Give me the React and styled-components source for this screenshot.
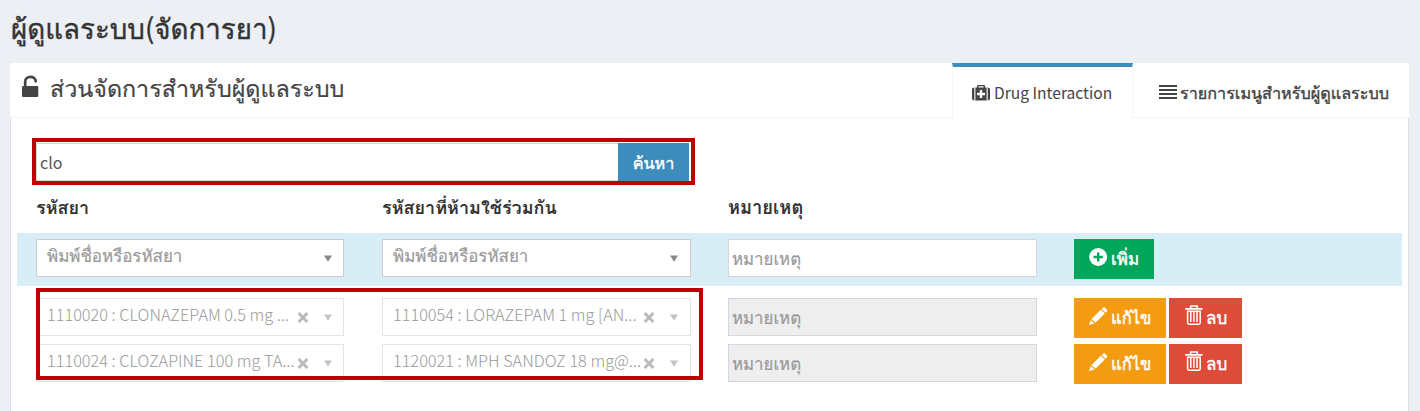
import React from "react";
import styled, { createGlobalStyle } from "styled-components";

const Global = createGlobalStyle`
  * { box-sizing: border-box; }
  body {
    margin: 0;
    background: #ecf0f5;
    overflow: hidden;
    font-family: "Noto Sans CJK JP", Tahoma, Loma, Waree, "Noto Sans Thai", "Noto Sans", sans-serif;
    font-size: 16px;
    color: #333;
  }
`;

const Page = styled.div`
  height: 411px;
  padding: 0 11px 0 10px;
  display: flex;
  flex-direction: column;
  overflow: hidden;
`;

const Text = styled.span`
  display: inline-block;
  white-space: nowrap;
  font-size: ${(p) => p.$size || 16}px;
  font-weight: ${(p) => p.$weight || 400};
  -webkit-text-stroke: ${(p) => p.$stroke || 0}px currentColor;
  line-height: 24px;
`;

const Title = styled.h1`
  margin: 0;
  height: 63px;
  flex: none;
  padding: 13px 0 0 1px;
  font-weight: 400;
  line-height: 24px;
`;

const Panel = styled.section`
  flex: 1;
  background: #fff;
  border-radius: 3px 3px 0 0;
`;

const Header = styled.header`
  height: 55px;
  display: flex;
  border-bottom: 1px solid #f4f4f4;
`;

const Heading = styled.div`
  flex: 1;
  display: flex;
  align-items: flex-start;
  gap: 11px;
  padding: 12px 0 0 12px;
  color: #444;
`;

const Tab = styled.div`
  height: 55px;
  width: ${(p) => p.$width}px;
  display: flex;
  align-items: flex-start;
  gap: ${(p) => p.$gap}px;
  padding: ${(p) => (p.$active ? 13 : 17)}px 0 0 ${(p) => (p.$active ? 19 : 26)}px;
  border-top: ${(p) => (p.$active ? "4px solid #3c8dbc" : "0")};
  border-left: ${(p) => (p.$active ? "1px solid #f4f4f4" : "0")};
  border-right: ${(p) => (p.$active ? "1px solid #f4f4f4" : "0")};
  background: ${(p) => (p.$active ? "#fff" : "transparent")};
  color: #444;
  svg { margin-top: 5px; flex: none; }
`;

const Body = styled.div`
  position: relative;
  height: 293px;
  padding: 25px 6px 0;
  border-left: 1px solid #dcdde0;
  border-right: 1px solid #dcdde0;
`;

const Search = styled.div`
  display: flex;
  height: 38px;
  width: 653px;
  margin-left: 19px;
`;

const SearchInput = styled.div`
  flex: 1;
  display: flex;
  align-items: flex-start;
  padding: 6px 0 0 3px;
  border: 1px solid #d2d6de;
  border-right: 0;
  color: #555;
`;

const SearchButton = styled.div`
  width: 71px;
  display: flex;
  justify-content: center;
  padding-top: 7px;
  background: #3c8dbc;
  color: #fff;
`;

const Row = styled.div`
  display: grid;
  grid-template-columns: 346px 346px 346px 1fr;
  height: ${(p) => p.$height}px;
  padding: ${(p) => p.$top || 0}px 0 0 19px;
  background: ${(p) => (p.$info ? "#d9edf7" : "transparent")};
`;

const Select = styled.div`
  width: ${(p) => p.$width || 308}px;
  height: 38px;
  display: flex;
  align-items: flex-start;
  padding: 3px ${(p) => (p.$width === 309 ? 12 : 11)}px 0 10px;
  border: 1px solid ${(p) => (p.$disabled ? "#e4e4e4" : "#ccc")};
  background: #fff;
  color: ${(p) => (p.$disabled ? "#999" : "#999")};
  > span { flex: 1; }
  svg { flex: none; }
`;

const Note = styled.div`
  width: 309px;
  height: 38px;
  padding: 6px 0 0 3px;
  border: 1px solid #d2d6de;
  background: ${(p) => (p.$disabled ? "#eee" : "#fff")};
  color: #999;
`;

const Actions = styled.div`
  display: flex;
  gap: 3px;
`;

const Button = styled.div`
  width: ${(p) => p.$width}px;
  height: 40px;
  display: flex;
  align-items: flex-start;
  gap: 3px;
  padding: 7px 0 0 ${(p) => p.$left || 15}px;
  background: ${(p) => p.$color};
  color: #fff;
  svg { flex: none; margin-top: 2px; }
`;

const Highlight = styled.div`
  position: absolute;
  left: ${(p) => p.$x}px;
  top: ${(p) => p.$y}px;
  width: ${(p) => p.$w}px;
  height: ${(p) => p.$h}px;
  border: 4px solid #c00000;
`;

const ClearSvg = styled.svg`
  margin: 10px 15px 0 0;
`;
const ArrowSvg = styled.svg`
  margin-top: 12px;
`;

const UnlockIcon = () => (
  <svg width="17" height="22" viewBox="0 0 17 22">
    <path d="M3.2 12V6.6C3.2 0.4 13.7 0.4 13.7 6.3" fill="none" stroke="#444" strokeWidth="2.7" strokeLinecap="round" />
    <rect x="0" y="11" width="16.3" height="11" rx="1.2" fill="#444" />
  </svg>
);

const MedkitIcon = () => (
  <svg width="18" height="16" viewBox="0 0 18 16" fill="#444">
    <path d="M2.3 2.5V15.5C.8 15.5 0 14.6 0 13.3V4.7C0 3.4.8 2.5 2.3 2.5ZM15.7 2.5C17.2 2.5 18 3.4 18 4.7V13.3C18 14.6 17.2 15.5 15.7 15.5Z" />
    <path fillRule="evenodd" d="M5 2.5V1Q5 0 6 0H12Q13 0 13 1V2.5H14.6V15.5H3.4V2.5ZM6.4 2.5H11.6V1.3H6.4ZM7.8 5V7.8H5V10.2H7.8V13H10.2V10.2H13V7.8H10.2V5Z" />
  </svg>
);

const ListIcon = () => (
  <svg width="18" height="14" viewBox="0 0 18 14" fill="#444" shapeRendering="crispEdges">
    <path d="M0 0h18v2H0zM0 4h18v2H0zM0 8h18v2H0zM0 12h18v2H0z" />
  </svg>
);

const PlusIcon = () => (
  <svg width="19" height="18" viewBox="0 0 19 18">
    <circle cx="9.2" cy="9" r="9" fill="#fff" />
    <path d="M9.2 4.4v9.2M4.6 9h9.2" stroke="#00a65a" strokeWidth="2.4" />
  </svg>
);

const PencilIcon = () => (
  <svg width="19" height="18" viewBox="0 0 19 18" fill="#fff">
    <path d="M14.2.5Q15 0 15.8.6L18.1 2.9Q18.7 3.6 18.1 4.3L16.6 5.7 12.7 1.9ZM11.9 2.7 15.8 6.5 6.4 15.8 2.5 12ZM1.8 12.9 5.4 16.5 0 18Z" />
  </svg>
);

const TrashSvg = styled.svg`
  && { margin-top: 0; }
`;

const TrashIcon = () => (
  <TrashSvg width="18" height="20" viewBox="0 0 18 20" fill="none" stroke="#fff">
    <path d="M5.6 3V1H12.2V3" strokeWidth="1.6" strokeLinejoin="round" />
    <path d="M0.9 3.8H16.9" strokeWidth="1.8" strokeLinecap="round" />
    <path d="M2.6 6.2H15.2V17.8Q15.2 19.2 14 19.2H3.8Q2.6 19.2 2.6 17.8ZM5.8 6.5V17M8.9 6.5V17M12 6.5V17" strokeWidth="1.5" />
  </TrashSvg>
);

const Clear = () => (
  <ClearSvg width="12" height="11" viewBox="0 0 12 11">
    <path d="M1.6 1 10.4 10M10.4 1 1.6 10" stroke="#bbb" strokeWidth="3" />
  </ClearSvg>
);

const Arrow = ({ color }) => (
  <ArrowSvg width="8" height="7" viewBox="0 0 8 7">
    <path d="M0 .5H8L4 6.8Z" fill={color} />
  </ArrowSvg>
);

const drugs = [
  { first: "1110020 : CLONAZEPAM 0.5 mg ...", second: "1110054 : LORAZEPAM 1 mg [AN..." },
  { first: "1110024 : CLOZAPINE 100 mg TA...", second: "1120021 : MPH SANDOZ 18 mg@..." },
];

const DrugSelect = ({ children, width }) => (
  <Select $disabled $width={width}>
    <Text $size={16.3} $weight={300}>{children}</Text>
    <Clear />
    <Arrow color="#c4c4c4" />
  </Select>
);

const EmptySelect = ({ width }) => (
  <Select $width={width}>
    <Text $size={16.9} $stroke={0.2}>พิมพ์ชื่อหรือรหัสยา</Text>
    <Arrow color="#888" />
  </Select>
);

export default function App() {
  return (
    <>
      <Global />
      <Page>
        <Title><Text $size={27.7} $stroke={0.4}>ผู้ดูแลระบบ(จัดการยา)</Text></Title>
        <Panel>
          <Header>
            <Heading>
              <UnlockIcon />
              <Text $size={23.3} $stroke={0.2}>ส่วนจัดการสำหรับผู้ดูแลระบบ</Text>
            </Heading>
            <Tab $active $width={181} $gap={4}>
              <MedkitIcon />
              <Text $size={15.6}>Drug Interaction</Text>
            </Tab>
            <Tab $width={276} $gap={3}>
              <ListIcon />
              <Text $size={16.2} $stroke={0.4}>รายการเมนูสำหรับผู้ดูแลระบบ</Text>
            </Tab>
          </Header>
          <Body>
            <Search>
              <SearchInput><Text $size={16}>clo</Text></SearchInput>
              <SearchButton><Text $size={16.2} $stroke={0.4}>ค้นหา</Text></SearchButton>
            </Search>
            <Row $height={52} $top={13}>
              <Text $size={18} $weight={700}>รหัสยา</Text>
              <Text $size={18} $weight={700}>รหัสยาที่ห้ามใช้ร่วมกัน</Text>
              <Text $size={18.3} $weight={700}>หมายเหตุ</Text>
            </Row>
            <Row $info $height={53} $top={6}>
              <EmptySelect />
              <EmptySelect width={309} />
              <Note><Text $size={16.8} $stroke={0.2}>หมายเหตุ</Text></Note>
              <Actions>
                <Button $width={80} $color="#00a65a"><PlusIcon /><Text $size={17} $stroke={0.4}>เพิ่ม</Text></Button>
              </Actions>
            </Row>
            {drugs.map((d, i) => (
              <Row key={d.first} $height={i === 0 ? 52 : 46} $top={i === 0 ? 12 : 6}>
                <DrugSelect>{d.first}</DrugSelect>
                <DrugSelect width={309}>{d.second}</DrugSelect>
                <Note $disabled><Text $size={16.8} $stroke={0.2}>หมายเหตุ</Text></Note>
                <Actions>
                  <Button $width={92} $color="#f39c12"><PencilIcon /><Text $size={16.6} $stroke={0.4}>แก้ไข</Text></Button>
                  <Button $width={73} $left={16} $color="#dd4b39"><TrashIcon /><Text $size={17} $stroke={0.4}>ลบ</Text></Button>
                </Actions>
              </Row>
            ))}
            <Highlight $x={21} $y={20} $w={663} $h={47} />
            <Highlight $x={25} $y={170} $w={667} $h={92} />
          </Body>
        </Panel>
      </Page>
    </>
  );
}
